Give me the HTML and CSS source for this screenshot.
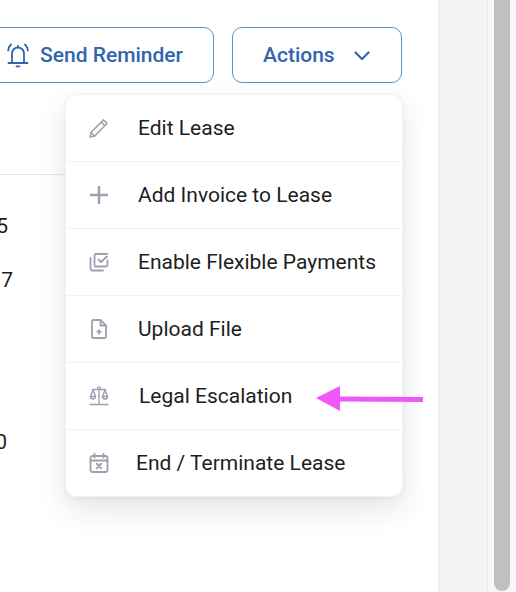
FILE: index.html
```html
<!DOCTYPE html>
<html lang="en">
<head>
<meta charset="utf-8">
<title>Lease actions</title>
<link rel="stylesheet" href="styles.css">
</head>
<body>
<div class="app">
  <main class="main">
    <div class="toolbar">
      <button class="btn btn-reminder">
        <svg class="bell" viewBox="0 0 22 25" fill="none" stroke="currentColor" stroke-width="1.8" stroke-linecap="round" stroke-linejoin="round"><path d="M5 19V10.500a6 6 0 0 1 12 0V19"/><path d="M1.500 20h19"/><path d="M9.500 23.300h3"/><path d="M11 2.800v1.500"/><path d="M4 1.500A9 9 0 0 0 1.200 7.500"/><path d="M18 1.500A9 9 0 0 1 20.800 7.500"/></svg>
        <span>Send Reminder</span>
      </button>
      <button class="btn btn-actions">
        <span>Actions</span>
        <svg class="chev" viewBox="0 0 16 10" fill="none" stroke="currentColor" stroke-width="2.200" stroke-linecap="round" stroke-linejoin="round"><path d="M1.500 1.500 8 8l6.500-6.500"/></svg>
      </button>
    </div>
    <div class="table">
      <div class="cell cell-a"><span>5</span></div>
      <div class="cell cell-b"><span>7</span></div>
      <div class="cell cell-c"><span>0</span></div>
    </div>
    <div class="menu">
      <div class="item">
        <svg class="icon" viewBox="0 0 20 20" fill="none" stroke="currentColor" stroke-width="1.500" stroke-linejoin="round"><path d="M1 19l.9-4.500L14.500 1.900l3.600 3.600L5.500 18.100z"/><path d="M1.900 14.500l3.600 3.600"/><path d="M12.300 4.100l3.600 3.600"/></svg>
        <span class="label">Edit Lease</span>
      </div>
      <div class="item">
        <svg class="icon" viewBox="0 0 20 20" fill="none" stroke="currentColor" stroke-width="2.400"><path d="M10 1v18M1 10h18"/></svg>
        <span class="label">Add Invoice to Lease</span>
      </div>
      <div class="item">
        <svg class="icon" viewBox="0 0 20 20" fill="none" stroke="currentColor" stroke-width="1.800" stroke-linecap="round" stroke-linejoin="round"><path d="M5.500 13V3.500a1.500 1.500 0 0 1 1.500-1.500h11"/><path d="M18.500 8.500V13a1.500 1.500 0 0 1-1.500 1.500H6"/><path d="M1.500 6v11a1.500 1.500 0 0 0 1.500 1.500h11"/><path d="M9.500 7.500l2.500 2.500 6-5.500"/></svg>
        <span class="label">Enable Flexible Payments</span>
      </div>
      <div class="item">
        <svg class="icon" viewBox="0 0 20 20" fill="none" stroke="currentColor" stroke-width="1.800" stroke-linejoin="round"><path d="M4 1h7.500L17 6.500V17.500a1.500 1.500 0 0 1-1.500 1.500h-11A1.500 1.500 0 0 1 3 17.500V2z"/><path d="M11.500 1v5.500H17"/><path d="M10 15.500v-4" stroke-width="2.200"/><path d="M7.500 13 10 10.500l2.500 2.500z" fill="currentColor" stroke-width=".8"/></svg>
        <span class="label">Upload File</span>
      </div>
      <div class="item item-legal">
        <svg class="icon" viewBox="0 0 20 20" fill="none" stroke="currentColor" stroke-width="1.400" stroke-linecap="round" stroke-linejoin="round"><circle cx="10" cy="2.300" r="1.400"/><path d="M10 3.800V17.500"/><path d="M1 18.500h18"/><path d="M3.500 3.500h5M11.500 3.500h5"/><path d="M4 4 1.500 10.500h5z"/><path d="M16 4l-2.500 6.500h5z"/><path d="M1.500 10.500a2.500 2.500 0 0 0 5 0M13.500 10.500a2.500 2.500 0 0 0 5 0"/></svg>
        <span class="label">Legal Escalation</span>
      </div>
      <div class="item item-end">
        <svg class="icon" viewBox="0 0 20 20" fill="none" stroke="currentColor" stroke-width="1.800" stroke-linecap="round" stroke-linejoin="round"><rect x="1.500" y="3" width="17" height="16" rx="2"/><path d="M1.500 7.500h17"/><path d="M5.500 .8V4.500M14.500 .8V4.500"/><path d="M7.800 10.800l4.400 4.400M12.200 10.800l-4.400 4.400" stroke-width="2"/></svg>
        <span class="label">End / Terminate Lease</span>
      </div>
    </div>
    <svg class="arrow" viewBox="0 0 108 25" fill="#ee58f8"><path d="M0 12 24 0v10.500l83 .5v5l-83-.5V25z"/></svg>
  </main>
  <aside class="side"></aside>
  <div class="track"><div class="thumb"></div></div>
</div>
</body>
</html>
```
FILE: styles.css
```css
* { box-sizing: border-box; }
html, body { margin: 0; height: 100%; overflow: hidden; background: #fff; }
body { font-family: Roboto, "Liberation Sans", sans-serif; }
.app { display: flex; width: 516px; height: 592px; }
.main { position: relative; width: 438px; flex: none; background: #fff; overflow: hidden; }
.toolbar { display: flex; justify-content: flex-end; gap: 18px; padding: 27px 36px 0 0; }
.btn { display: flex; align-items: center; height: 56px; background: #fff; border: 1px solid #5f90c9; border-radius: 10px; color: #2f66ad; font: 500 21px/24px Roboto, sans-serif; padding: 0; }
.btn-reminder { width: 230px; margin-left: -16px; padding-left: 22px; gap: 11px; flex: none; }
.btn-actions { width: 170px; padding-left: 30px; gap: 19px; flex: none; }
.bell { width: 22px; height: 25px; }
.chev { width: 16px; height: 10px; margin-top: 1px; }
.table { width: 402px; margin-top: 91px; border-top: 1px solid #e5e7eb; padding-top: 39px; font-size: 21px; line-height: 24px; color: #1e1e1e; }
.cell { display: flex; justify-content: flex-end; }
.cell-a { width: 8px; }
.cell-b { width: 13px; margin-top: 30px; }
.cell-c { width: 7px; margin-top: 138px; }
.menu { position: absolute; left: 66px; top: 95px; width: 336px; height: 401px; background: #fff; border-radius: 10px; box-shadow: 0 0 0 1px #f2f2f4, 0 12px 30px rgba(30, 35, 60, .13), 0 2px 6px rgba(30, 35, 60, .06); display: flex; flex-direction: column; }
.item { height: 67px; flex: none; display: flex; align-items: center; padding-left: 23px; border-bottom: 1px solid #f1f1f3; color: #9ba1b0; }
.item:last-child { border-bottom: 0; height: 66px; }
.icon { width: 20px; height: 20px; flex: none; }
.label { margin-left: 29px; color: #1e1e1e; font-size: 21px; line-height: 24px; }
.item-legal .label { margin-left: 30px; }
.item-end .label { margin-left: 27px; }
.arrow { position: absolute; left: 316px; top: 386px; width: 108px; height: 25px; }
.side { width: 50px; flex: none; background: #f2f3f5; box-shadow: inset 3px 0 3px -2px rgba(0, 0, 0, .05); border-right: 1px solid #e9e9e9; }
.track { flex: 1; background: #f8f8f8; padding: 0 6px 0 6px; }
.thumb { height: 591px; background: #c0c0c0; border-radius: 0 0 8px 8px; }
```
